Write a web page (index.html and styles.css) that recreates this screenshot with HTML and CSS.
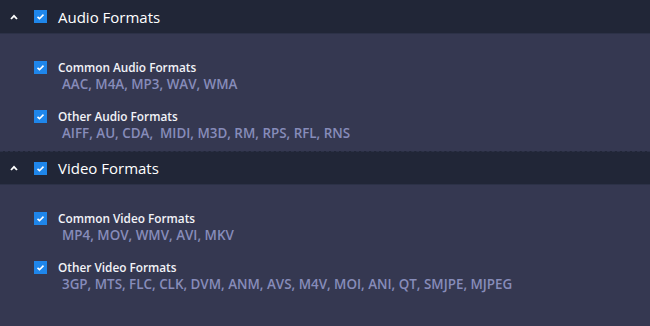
FILE: index.html
```html
<!DOCTYPE html>
<html>
<head>
<meta charset="utf-8">
<link rel="stylesheet" href="styles.css">
</head>
<body>
<div class="panel">
  <section class="group">
    <div class="group-head">
      <svg class="chev" width="8" height="6" viewBox="0 0 8 6"><polyline points="1,5 4,1.8 7,5" fill="none" stroke="#ffffff" stroke-width="1.8"/></svg>
      <span class="cb"><svg width="13" height="13" viewBox="0 0 13 13"><polyline points="3.5,6.8 5.5,8.7 9.5,4.6" fill="none" stroke="#fff" stroke-width="1.6"/></svg></span>
      <span class="group-title">Audio Formats</span>
    </div>
    <div class="group-body">
      <div class="item">
        <span class="cb"><svg width="13" height="13" viewBox="0 0 13 13"><polyline points="3.5,6.8 5.5,8.7 9.5,4.6" fill="none" stroke="#fff" stroke-width="1.6"/></svg></span>
        <div class="item-text">
          <div class="item-title">Common Audio Formats</div>
          <div class="item-sub">AAC, M4A, MP3, WAV, WMA</div>
        </div>
      </div>
      <div class="item">
        <span class="cb"><svg width="13" height="13" viewBox="0 0 13 13"><polyline points="3.5,6.8 5.5,8.7 9.5,4.6" fill="none" stroke="#fff" stroke-width="1.6"/></svg></span>
        <div class="item-text">
          <div class="item-title">Other Audio Formats</div>
          <div class="item-sub">AIFF, AU, CDA,&nbsp; MIDI, M3D, RM, RPS, RFL, RNS</div>
        </div>
      </div>
    </div>
  </section>
  <section class="group">
    <div class="group-head second">
      <svg class="chev" width="8" height="6" viewBox="0 0 8 6"><polyline points="1,5 4,1.8 7,5" fill="none" stroke="#ffffff" stroke-width="1.8"/></svg>
      <span class="cb"><svg width="13" height="13" viewBox="0 0 13 13"><polyline points="3.5,6.8 5.5,8.7 9.5,4.6" fill="none" stroke="#fff" stroke-width="1.6"/></svg></span>
      <span class="group-title">Video Formats</span>
    </div>
    <div class="group-body">
      <div class="item">
        <span class="cb"><svg width="13" height="13" viewBox="0 0 13 13"><polyline points="3.5,6.8 5.5,8.7 9.5,4.6" fill="none" stroke="#fff" stroke-width="1.6"/></svg></span>
        <div class="item-text">
          <div class="item-title">Common Video Formats</div>
          <div class="item-sub">MP4, MOV, WMV, AVI, MKV</div>
        </div>
      </div>
      <div class="item">
        <span class="cb"><svg width="13" height="13" viewBox="0 0 13 13"><polyline points="3.5,6.8 5.5,8.7 9.5,4.6" fill="none" stroke="#fff" stroke-width="1.6"/></svg></span>
        <div class="item-text">
          <div class="item-title">Other Video Formats</div>
          <div class="item-sub">3GP, MTS, FLC, CLK, DVM, ANM, AVS, M4V, MOI, ANI, QT, SMJPE, MJPEG</div>
        </div>
      </div>
    </div>
  </section>
</div>
</body>
</html>
```
FILE: styles.css
```css
html, body {
  margin: 0;
  padding: 0;
  background: #353851;
}
body {
  width: 650px;
  height: 326px;
  overflow: hidden;
  font-family: "Open Sans", "Noto Sans", sans-serif;
}
.panel {
  display: flex;
  flex-direction: column;
}
.group-head {
  height: 33px;
  background: #212637;
  border-bottom: 1px solid #2c3147;
  display: flex;
  align-items: center;
  box-sizing: content-box;
}
.group-head.second {
  border-top: 1px dashed #2c3147;
  height: 32px;
}
.chev {
  margin-left: 10px;
  width: 8px;
  height: 6px;
}
.cb {
  width: 13px;
  height: 13px;
  background: #1f86ea;
  display: flex;
  flex: none;
}
.group-head .cb {
  margin-left: 16px;
}
.group-title {
  margin-left: 11px;
  color: #ffffff;
  font-size: 15px;
  line-height: 20px;
}
.group-body {
  padding: 25px 0 10px 34px;
  display: flex;
  flex-direction: column;
  gap: 16px;
}
.item {
  display: flex;
  align-items: flex-start;
}
.item .cb {
  margin-top: 2px;
}
.item-text {
  margin-left: 11px;
  display: flex;
  flex-direction: column;
}
.item-title {
  color: #f2f3f8;
  font-weight: 600;
  font-size: 11.8px;
  line-height: 17px;
}
.item-sub {
  color: #878cba;
  font-size: 13.4px;
  line-height: 16px;
  padding-left: 4px;
  font-weight: 600;
}
```
